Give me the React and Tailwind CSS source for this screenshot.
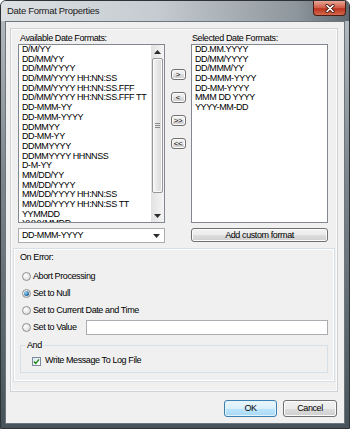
import React from "react";

const AVAILABLE = [
  "D/M/YY",
  "DD/MM/YY",
  "DD/MM/YYYY",
  "DD/MM/YYYY HH:NN:SS",
  "DD/MM/YYYY HH:NN:SS.FFF",
  "DD/MM/YYYY HH:NN:SS.FFF TT",
  "DD-MMM-YY",
  "DD-MMM-YYYY",
  "DDMMYY",
  "DD-MM-YY",
  "DDMMYYYY",
  "DDMMYYYY HHNNSS",
  "D-M-YY",
  "MM/DD/YY",
  "MM/DD/YYYY",
  "MM/DD/YYYY HH:NN:SS",
  "MM/DD/YYYY HH:NN:SS TT",
  "YYMMDD",
  "YYYYMMDD",
];

const SELECTED = [
  "DD.MM.YYYY",
  "DD/MM/YYYY",
  "DD/MMM/YY",
  "DD-MMM-YYYY",
  "DD-MM-YYYY",
  "MMM DD YYYY",
  "YYYY-MM-DD",
];

const btn =
  "border border-[#707070] rounded-[3px] bg-[linear-gradient(to_bottom,#f2f2f2_0%,#ebebeb_50%,#dddddd_50%,#cfcfcf_100%)] shadow-[inset_0_0_0_1px_#fcfcfc] flex items-center justify-center leading-none text-black";

function Arrow({ dir }) {
  return (
    <svg width="7" height="4" viewBox="0 0 7 4">
      <path d={dir === "up" ? "M0 4 L3.5 0 L7 4 Z" : "M0 0 L7 0 L3.5 4 Z"} fill="#2b2b2b" />
    </svg>
  );
}

function ScrollBar() {
  return (
    <div className="w-[13px] h-full flex flex-col bg-[linear-gradient(to_right,#e2e2e2,#f4f4f4)]">
      <div className="h-[13px] flex items-center justify-center">
        <Arrow dir="up" />
      </div>
      <div className="h-[135px] mx-[1px] rounded-[2px] border border-[#979797] bg-[linear-gradient(to_right,#f6f6f6,#e6e6e6_50%,#d9d9d9)] shadow-[inset_0_0_0_1px_#fbfbfb] flex flex-col items-center justify-center gap-[1px]">
        <div className="w-[5px] h-px bg-[#8a8a8a]" />
        <div className="w-[5px] h-px bg-[#8a8a8a]" />
        <div className="w-[5px] h-px bg-[#8a8a8a]" />
      </div>
      <div className="flex-1" />
      <div className="h-[13px] flex items-center justify-center">
        <Arrow dir="down" />
      </div>
    </div>
  );
}

function ListBox({ items, scroll }) {
  return (
    <div className="h-[179px] border border-[#828790] bg-white flex">
      <div className="flex-1 overflow-hidden pl-[3px]">
        {items.map((t) => (
          <div key={t} className="h-[9.7px] leading-[9.7px] whitespace-nowrap">
            {t}
          </div>
        ))}
      </div>
      {scroll && <ScrollBar />}
    </div>
  );
}

function Radio({ checked }) {
  return (
    <span className="w-[9px] h-[9px] rounded-full border border-[#8e8f8f] bg-[radial-gradient(circle_at_35%_35%,#ffffff,#d4d4d4)] flex items-center justify-center shrink-0">
      {checked && (
        <span className="w-[5px] h-[5px] rounded-full bg-[radial-gradient(circle_at_35%_35%,#9fdcff,#1f5f98_70%,#123f6a)]" />
      )}
    </span>
  );
}

function RadioRow({ label, checked, children }) {
  return (
    <div className="h-[17px] flex items-center pl-[8px]">
      <Radio checked={checked} />
      <span className={children ? "ml-[2px] w-[53px] whitespace-nowrap" : "ml-[2px] whitespace-nowrap"}>
        {label}
      </span>
      {children}
    </div>
  );
}

export default function App() {
  return (
    <div className="w-[350px] h-[429px] flex flex-col rounded-t-[6px] border border-[#2c3236] bg-[linear-gradient(to_bottom,#b9c0c5,#7d868c_40%,#47535a)] font-['Liberation_Sans',Arial,sans-serif] text-[9px] tracking-[-0.4px] text-black overflow-hidden">
      {/* title bar */}
      <div className="h-[20px] flex justify-between bg-[linear-gradient(to_right,#dde1e4,#c5cbd0_45%,#8d969c_85%,#5f686e)]">
        <div className="pl-[6px] pt-[3px] text-[9.5px] tracking-[-0.3px] text-[#1b1b1b]">
          Date Format Properties
        </div>
        <div className="mr-[3px] w-[33px] h-[15px] rounded-b-[4px] border border-t-0 border-[#4a1c13] bg-[linear-gradient(to_bottom,#e8a796,#cf5a44_50%,#b8321c_55%,#d56a4e)] flex items-center justify-center">
          <svg width="10" height="9" viewBox="0 0 10 9">
            <path d="M2 1.5 L8 7.5 M8 1.5 L2 7.5" stroke="#4a1c13" strokeWidth="3.2" strokeLinecap="round" />
            <path d="M2 1.5 L8 7.5 M8 1.5 L2 7.5" stroke="#ffffff" strokeWidth="1.6" strokeLinecap="round" />
          </svg>
        </div>
      </div>

      {/* client area */}
      <div className="mx-[4px] mb-[4px] flex-1 border border-[#6d767c] bg-[#f0f0f0] flex flex-col">
        {/* main panel */}
        <div className="ml-[4px] mr-[6px] mt-[6px] h-[364px] border border-[#cdd3d7] shadow-[inset_0_0_0_1px_#fafafa] flex flex-col">
          <div className="flex pt-[4px]">
            {/* left column */}
            <div className="ml-[7px] w-[147px] flex flex-col">
              <div className="h-[11px] leading-[10px] pl-[2px]">Available Date Formats:</div>
              <ListBox items={AVAILABLE} scroll />
              <div className="mt-[5px] h-[15px] border border-[#abadb3] bg-white flex items-center justify-between pl-[3px] pr-[4px]">
                <span>DD-MMM-YYYY</span>
                <Arrow dir="down" />
              </div>
            </div>

            {/* move buttons */}
            <div className="w-[26px] flex flex-col items-center pt-[36px] gap-[12px]">
              <div className={`${btn} w-[15px] h-[11px] text-[8px]`}>&gt;</div>
              <div className={`${btn} w-[15px] h-[11px] text-[8px]`}>&lt;</div>
              <div className={`${btn} w-[15px] h-[11px] text-[8px]`}>&gt;&gt;</div>
              <div className={`${btn} w-[15px] h-[11px] text-[8px]`}>&lt;&lt;</div>
            </div>

            {/* right column */}
            <div className="w-[137px] flex flex-col">
              <div className="h-[11px] leading-[10px] pl-[1px]">Selected Date Formats:</div>
              <ListBox items={SELECTED} />
              <div className={`${btn} mt-[5px] h-[14px] text-[9px]`}>Add custom format</div>
            </div>
          </div>

          {/* On Error group */}
          <div className="ml-[2px] mt-[5px] w-[322px] h-[134px] border border-[#d5dfe5] shadow-[inset_0_0_0_1px_#ffffff] flex flex-col">
            <div className="pl-[6px] pt-[3px] h-[13px] leading-[10px]">On Error:</div>
            <div className="mt-[6px] flex flex-col">
              <RadioRow label="Abort Processing" />
              <RadioRow label="Set to Null" checked />
              <RadioRow label="Set to Current Date and Time" />
              <RadioRow label="Set to Value">
                <div className="w-[242px] h-[15px] border border-[#abadb3] bg-white" />
              </RadioRow>
            </div>
            <fieldset className="ml-[6px] mt-[4px] w-[308px] h-[33px] border border-[#d5dfe5]">
              <legend className="ml-[5px] px-[1px] leading-[10px]">And</legend>
              <div className="mt-[5px] h-[12px] flex items-center pl-[11px]">
                <span className="w-[9px] h-[9px] border border-[#7d8a99] bg-[linear-gradient(135deg,#dbe8f3,#ffffff)] flex items-center justify-center">
                  <svg width="7" height="7" viewBox="0 0 7 7">
                    <path d="M1 3.6 L2.8 5.4 L6 1.4" stroke="#2f8a1e" strokeWidth="1.5" fill="none" />
                  </svg>
                </span>
                <span className="ml-[4px] whitespace-nowrap">Write Message To Log File</span>
              </div>
            </fieldset>
          </div>
        </div>

        {/* bottom buttons */}
        <div className="mt-[8px] mr-[7px] flex justify-end gap-[6px]">
          <div className="w-[53px] h-[17px] rounded-[3px] border border-[#3c7fb1] bg-[linear-gradient(to_bottom,#eaf6fd_0%,#d9f0fc_50%,#bee6fd_50%,#a7d9f5_100%)] shadow-[inset_0_0_0_1px_#e4f4fd] flex items-center justify-center text-[9px]">
            OK
          </div>
          <div className={`${btn} w-[54px] h-[17px] text-[9px]`}>Cancel</div>
        </div>
      </div>
    </div>
  );
}
